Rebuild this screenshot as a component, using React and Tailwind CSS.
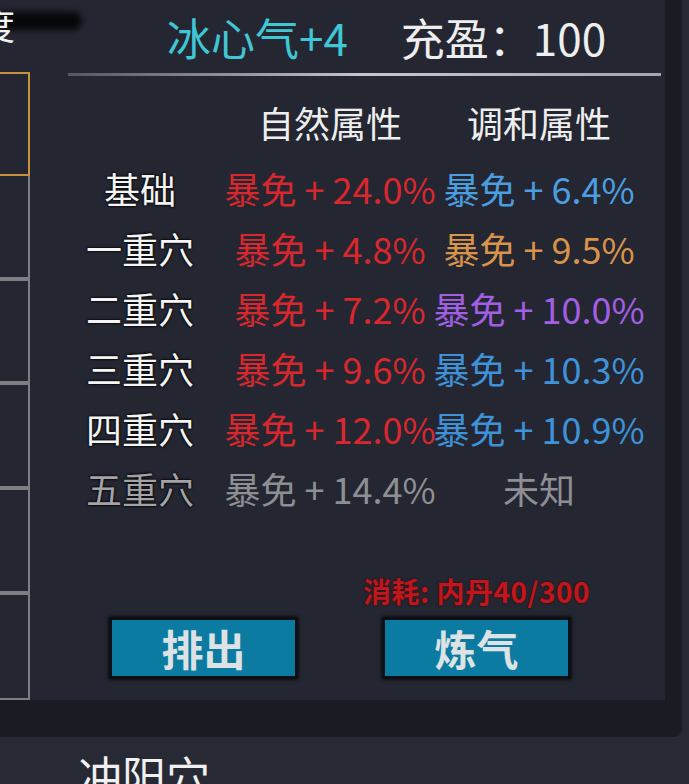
import React from 'react';

const rows = [
  { label: '基础', a: '暴免 + 24.0%', aColor: 'text-[#d8282d]', b: '暴免 + 6.4%', bColor: 'text-[#4b9ee0]' },
  { label: '一重穴', a: '暴免 + 4.8%', aColor: 'text-[#d8282d]', b: '暴免 + 9.5%', bColor: 'text-[#d9934a]' },
  { label: '二重穴', a: '暴免 + 7.2%', aColor: 'text-[#d8282d]', b: '暴免 + 10.0%', bColor: 'text-[#a25fe4]' },
  { label: '三重穴', a: '暴免 + 9.6%', aColor: 'text-[#d8282d]', b: '暴免 + 10.3%', bColor: 'text-[#3f92d8]' },
  { label: '四重穴', a: '暴免 + 12.0%', aColor: 'text-[#d8282d]', b: '暴免 + 10.9%', bColor: 'text-[#3f92d8]' },
  { label: '五重穴', a: '暴免 + 14.4%', aColor: 'text-[#8e8f94]', b: '未知', bColor: 'text-[#8e8f94]', locked: true },
];

const App = () => {
  return (
    <div className="w-[689px] h-[784px] overflow-hidden bg-[#272a34] font-['Noto_Sans_CJK_SC','Noto_Sans',sans-serif]">
      {/* outer dark frame */}
      <div className="relative w-[682px] h-[737px] bg-[#1a1c24] rounded-br-[8px]">
        <div className="flex w-[665px] h-[700px] bg-[#242631]">
          {/* left slot column */}
          <div className="w-[30px] shrink-0 flex flex-col">
            <div className="relative h-[72px]">
              <div className="absolute left-0 top-[12px] w-[82px] h-[18px] bg-black/80 blur-[3px] rounded-r-full"></div>
              <span className="relative block -ml-[21px] mt-[6px] text-[36px] leading-none text-[#f2f2f2]">度</span>
            </div>
            <div className="h-[104px] border-2 border-l-0 border-[#c8913e]"></div>
            <div className="h-[105px] border-r-2 border-b-[4px] border-[#7c7e84]"></div>
            <div className="h-[105px] border-r-2 border-b-[4px] border-[#7c7e84]"></div>
            <div className="h-[105px] border-r-2 border-b-[4px] border-[#7c7e84]"></div>
            <div className="h-[105px] border-r-2 border-b-[4px] border-[#7c7e84]"></div>
            <div className="h-[105px] border-r-2 border-b-2 border-[#7c7e84]"></div>
          </div>

          {/* main panel */}
          <div className="flex-1 flex flex-col">
            <div className="h-[73px] flex items-center pl-[137px] text-[44px] leading-none">
              <span className="text-[#40c6d4]">冰心气+4</span>
              <span className="ml-[53px] text-[#eeeeee]">充盈：100</span>
            </div>
            <div className="h-[3px] ml-[38px] mr-[4px] bg-linear-to-r from-[#55585f] via-[#c4c7cc] to-[#a3a6ad]"></div>

            <div className="ml-[40px] mt-[16px] grid grid-cols-[140px_240px_178px] h-[60px] items-center text-[36px] text-[#eeeeee]">
              <div></div>
              <div className="flex justify-center">自然属性</div>
              <div className="flex justify-center">调和属性</div>
            </div>

            <div className="ml-[40px] mt-[6px] flex flex-col">
              {rows.map((row) => (
                <div key={row.label} className="grid grid-cols-[140px_240px_178px] h-[60px] items-center text-[36px] leading-none whitespace-nowrap">
                  <div className={`flex justify-center [text-shadow:0_0_2px_#000,0_0_3px_#000] ${row.locked ? 'text-[#a3a3a6]' : 'text-[#f4f4f4]'}`}>
                    {row.label}
                  </div>
                  <div className={`flex justify-center ${row.aColor}`}>{row.a}</div>
                  <div className={`flex justify-center ${row.bColor}`}>{row.b}</div>
                </div>
              ))}
            </div>

            <div className="mt-[58px] h-[30px] flex items-center">
              <div className="ml-[352px] w-[189px] flex justify-center text-[28px] font-bold leading-none text-[#c1161b] tracking-[0.5px] [text-shadow:0_0_2px_#3a0000] whitespace-nowrap">
                消耗: 内丹40/300
              </div>
            </div>

            <div className="mt-[11px] flex pl-[79px] gap-[84px]">
              <button className="w-[189px] h-[62px] border-[3px] border-[#0c0f13] bg-[#0c7ba1] shadow-[0_0_4px_#000] flex items-center justify-center text-[42px] font-bold leading-none text-[#dde2e5]">
                排出
              </button>
              <button className="w-[189px] h-[62px] border-[3px] border-[#0c0f13] bg-[#0c7ba1] shadow-[0_0_4px_#000] flex items-center justify-center text-[42px] font-bold leading-none text-[#dde2e5]">
                炼气
              </button>
            </div>
          </div>
        </div>
      </div>

      {/* next section */}
      <div className="pl-[78px] pt-[16px] text-[44px] leading-none text-[#f0f0f0]">冲阳穴</div>
    </div>
  );
};

export default App;
